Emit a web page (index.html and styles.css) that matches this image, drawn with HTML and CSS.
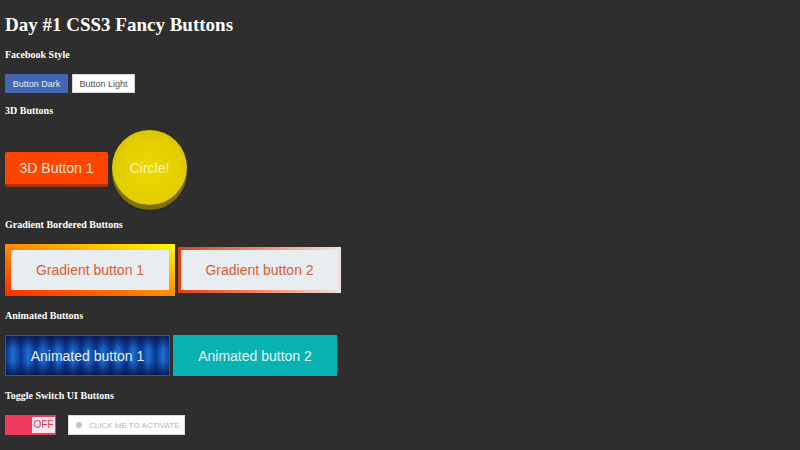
FILE: index.html
```html
<!DOCTYPE html>
<html>
<head>
<meta charset="utf-8">
<link rel="stylesheet" href="styles.css">
</head>
<body>
<main class="page">
  <h1 class="title">Day #1 CSS3 Fancy Buttons</h1>

  <h5 class="label">Facebook Style</h5>
  <div class="row row-fb">
    <button class="fb fb-dark">Button Dark</button>
    <button class="fb fb-light">Button Light</button>
  </div>

  <h5 class="label">3D Buttons</h5>
  <div class="row row-3d">
    <button class="btn3d">3D Button 1</button>
    <button class="circle">Circle!</button>
  </div>

  <h5 class="label">Gradient Bordered Buttons</h5>
  <div class="row row-grad">
    <button class="grad grad1">Gradient button 1</button>
    <button class="grad grad2">Gradient button 2</button>
  </div>

  <h5 class="label">Animated Buttons</h5>
  <div class="row row-anim">
    <button class="anim anim1">Animated button 1</button>
    <button class="anim anim2">Animated button 2</button>
  </div>

  <h5 class="label">Toggle Switch UI Buttons</h5>
  <div class="row row-toggle">
    <button class="toggle"><span class="toggle-off">OFF</span></button>
    <button class="activate"><span class="dot"></span>CLICK ME TO ACTIVATE</button>
  </div>
</main>
</body>
</html>
```

FILE: styles.css
```css
html, body {
  margin: 0;
  padding: 0;
  background: #2e2e2e;
  height: 100%;
}
.page {
  display: flex;
  flex-direction: column;
  align-items: flex-start;
  padding: 13px 5px 0;
  font-family: "Liberation Serif", "Times New Roman", serif;
  color: #fff;
}
.title {
  margin: 0 0 11px;
  font-size: 19px;
  line-height: 24px;
  font-weight: bold;
}
.label {
  margin: 0 0 12px;
  font-size: 10px;
  line-height: 14px;
  font-weight: bold;
}
.row {
  display: flex;
  align-items: center;
  margin-bottom: 13px;
}
button {
  font-family: "Liberation Sans", Arial, sans-serif;
  padding: 0;
  margin: 0;
  border: none;
  cursor: pointer;
}
/* Facebook */
.row-fb { gap: 4px; margin-bottom: 11px; }
.fb {
  width: 63px;
  height: 19px;
  font-size: 9px;
  box-sizing: border-box;
}
.fb-dark { background: #4267b2; color: #e9edf6; }
.fb-light { background: #fff; color: #4b4f56; border: 1px solid #d5d8dc; }

/* 3D */
.row-3d { gap: 4px; }
.btn3d {
  width: 103px;
  height: 32px;
  background: #ff4500;
  color: #fde6da;
  font-size: 14px;
  border-radius: 2px;
  box-shadow: 0 3px 0 #b23300;
}
.circle {
  width: 75px;
  height: 75px;
  border-radius: 50%;
  background: radial-gradient(circle at 50% 55%, #ecd800 0, #e3cf00 55%, #cdb900 100%);
  color: #faf2b8;
  font-size: 14px;
  box-shadow: 0 5px 0 #7f7000, 0 6px 2px rgba(0,0,0,0.3);
}

/* Gradient bordered */
.row-grad { gap: 3px; }
.grad {
  box-sizing: border-box;
  color: #dc5a32;
  font-size: 14px;
}
.grad1 {
  width: 170px;
  height: 52px;
  border: 6px solid transparent;
  background:
    linear-gradient(#e8edf1, #e8edf1) padding-box,
    linear-gradient(to top right, #ff2a00 0%, #ff8a00 50%, #ffff00 100%) border-box;
}
.grad2 {
  width: 163px;
  height: 46px;
  border: 3px solid transparent;
  background:
    linear-gradient(#e8edf1, #e8edf1) padding-box,
    linear-gradient(to right, #e23f12 0%, #f08a68 50%, #f2e2dd 100%) border-box;
}

/* Animated */
.row-anim { gap: 3px; }
.anim {
  box-sizing: border-box;
  height: 41px;
  font-size: 14px;
  color: #eaf2ff;
}
.anim1 {
  width: 165px;
  border: 1px solid #4d5563;
  background:
    linear-gradient(to bottom, rgba(5,15,70,0.8) 0%, rgba(5,15,70,0) 35%, rgba(5,15,70,0) 65%, rgba(5,15,70,0.8) 100%),
    repeating-linear-gradient(90deg, #0a3590 0px, #1c6fd2 7px, #0a3590 15px);
}
.anim2 {
  width: 164px;
  background: #06b3b0;
}

/* Toggle */
.row-toggle { gap: 12px; }
.toggle {
  width: 51px;
  height: 20px;
  background: #ef3b5d;
  display: flex;
  justify-content: flex-end;
  align-items: center;
  padding-right: 1px;
  box-sizing: border-box;
}
.toggle-off {
  background: #fbe8ee;
  color: #d6385a;
  font-size: 10px;
  line-height: 16px;
  width: 23px;
  text-align: center;
}
.activate {
  width: 117px;
  height: 20px;
  box-sizing: border-box;
  background: #fff;
  border: 1px solid #dcdcdc;
  color: #b4b4b4;
  font-size: 8px;
  display: flex;
  align-items: center;
  gap: 7px;
  padding-left: 7px;
}
.dot {
  width: 6px;
  height: 6px;
  border-radius: 50%;
  background: #c4c4c4;
}
```
